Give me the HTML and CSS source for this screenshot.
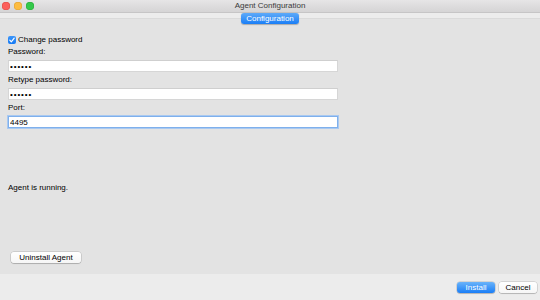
FILE: index.html
```html
<!DOCTYPE html>
<html lang="en">
<head>
  <meta charset="UTF-8" />
  <title>Agent Configuration</title>
  <link rel="stylesheet" href="styles.css">
</head>
<body>
  <div class="window">
    <div class="titlebar">
      <div class="lights">
        <span class="light red"></span>
        <span class="light yellow"></span>
        <span class="light green"></span>
      </div>
      <div class="title">Agent Configuration</div>
      <div></div>
    </div>

    <div class="tabbar">
      <button class="tab">Configuration</button>
    </div>

    <div class="panel">
      <label class="check-row">
        <span class="checkbox">
          <svg width="8" height="8" viewBox="0 0 8 8"><path d="M1.8 4.2 L3.3 5.8 L6.2 2.1" fill="none" stroke="#fff" stroke-width="1.2" stroke-linecap="round" stroke-linejoin="round"/></svg>
        </span>
        Change password
      </label>

      <div class="field">
        <div class="field-label">Password:</div>
        <input class="text-input dots" type="text" value="••••••">
      </div>
      <div class="field">
        <div class="field-label">Retype password:</div>
        <input class="text-input dots" type="text" value="••••••">
      </div>
      <div class="field">
        <div class="field-label">Port:</div>
        <input class="text-input focused" type="text" value="4495" autofocus>
      </div>

      <p class="status">Agent is running.</p>

      <button class="btn uninstall">Uninstall Agent</button>
    </div>

    <div class="footer">
      <button class="btn primary">Install</button>
      <button class="btn">Cancel</button>
    </div>
  </div>
</body>
</html>
```

FILE: styles.css
```css
* {
  box-sizing: border-box;
}
body {
  margin: 0;
  font-family: 'Liberation Sans', Arial, sans-serif;
  font-size: 8px;
  color: #000;
}

.window {
  width: 540px;
  height: 300px;
  display: flex;
  flex-direction: column;
  background: #ececec;
}

/* Title bar */
.titlebar {
  height: 13px;
  display: grid;
  grid-template-columns: 1fr auto 1fr;
  align-items: center;
  background: linear-gradient(#e6e5e6, #d5d4d5);
  border-bottom: 1px solid #c6c5c6;
}
.lights {
  display: flex;
  gap: 4px;
  padding-left: 2px;
}
.light {
  width: 8px;
  height: 8px;
  border-radius: 50%;
}
.red { background: #fc605c; box-shadow: inset 0 0 0 0.5px #de4a45; }
.yellow { background: #fdbc40; box-shadow: inset 0 0 0 0.5px #dea030; }
.green { background: #34c84a; box-shadow: inset 0 0 0 0.5px #27aa35; }
.title {
  color: #3a3a3a;
  line-height: 12px;
}

/* Tab */
.tabbar {
  height: 5px;
  display: flex;
  justify-content: center;
}
.tab {
  position: relative;
  z-index: 1;
  flex: none;
  width: 58px;
  height: 11px;
  padding: 0;
  border: none;
  border-radius: 3px;
  background: linear-gradient(#5eaaf9, #1a7ef6);
  box-shadow: 0 0.5px 1px rgba(0,0,0,0.25);
  color: #fff;
  font-family: inherit;
  font-size: 8px;
  line-height: 11px;
}

/* Panel */
.panel {
  flex: 1;
  display: flex;
  flex-direction: column;
  align-items: flex-start;
  padding: 18px 8px 11px;
  background: #e3e3e3;
  border-top: 1px solid #dadada;
}
.check-row {
  display: flex;
  align-items: center;
  gap: 2px;
  line-height: 8px;
  height: 8px;
  margin-top: -1px;
}
.checkbox {
  width: 8px;
  height: 8px;
  border-radius: 2px;
  background: linear-gradient(#3c95f9, #1479f4);
  display: flex;
}

.field {
  display: flex;
  flex-direction: column;
  margin-top: 3px;
}
.field-label {
  line-height: 10px;
  margin-bottom: 3px;
}
.text-input {
  width: 330px;
  height: 12px;
  margin: 0;
  padding: 0 1px;
  border: 1px solid #d6d6d6;
  border-top-color: #cfcfcf;
  background: #fff;
  font-family: inherit;
  font-size: 8px;
  color: #000;
  outline: none;
}
.text-input.dots {
  letter-spacing: 0.9px;
}
.text-input.focused {
  border-color: #7fb0ec;
  box-shadow: 0 0 0 1px #a9c9f1;
}

.status {
  margin: 55px 0 0;
  line-height: 10px;
}

/* Buttons */
.btn {
  height: 11px;
  width: 38px;
  padding: 0;
  border: none;
  border-radius: 3px;
  background: linear-gradient(#ffffff, #f6f6f6);
  box-shadow: 0 0 0 0.5px rgba(0,0,0,0.2), 0 1px 1px rgba(0,0,0,0.15);
  font-family: inherit;
  font-size: 8px;
  line-height: 11px;
  color: #000;
}
.btn.uninstall {
  width: 70px;
  margin: auto 0 0 3px;
}
.btn.primary {
  background: linear-gradient(#6ab3fa, #1a7ef6);
  color: #fff;
}

.footer {
  height: 26px;
  display: flex;
  justify-content: flex-end;
  align-items: flex-start;
  gap: 4px;
  padding: 8px 3px 0 0;
  background: #ececec;
}
```
